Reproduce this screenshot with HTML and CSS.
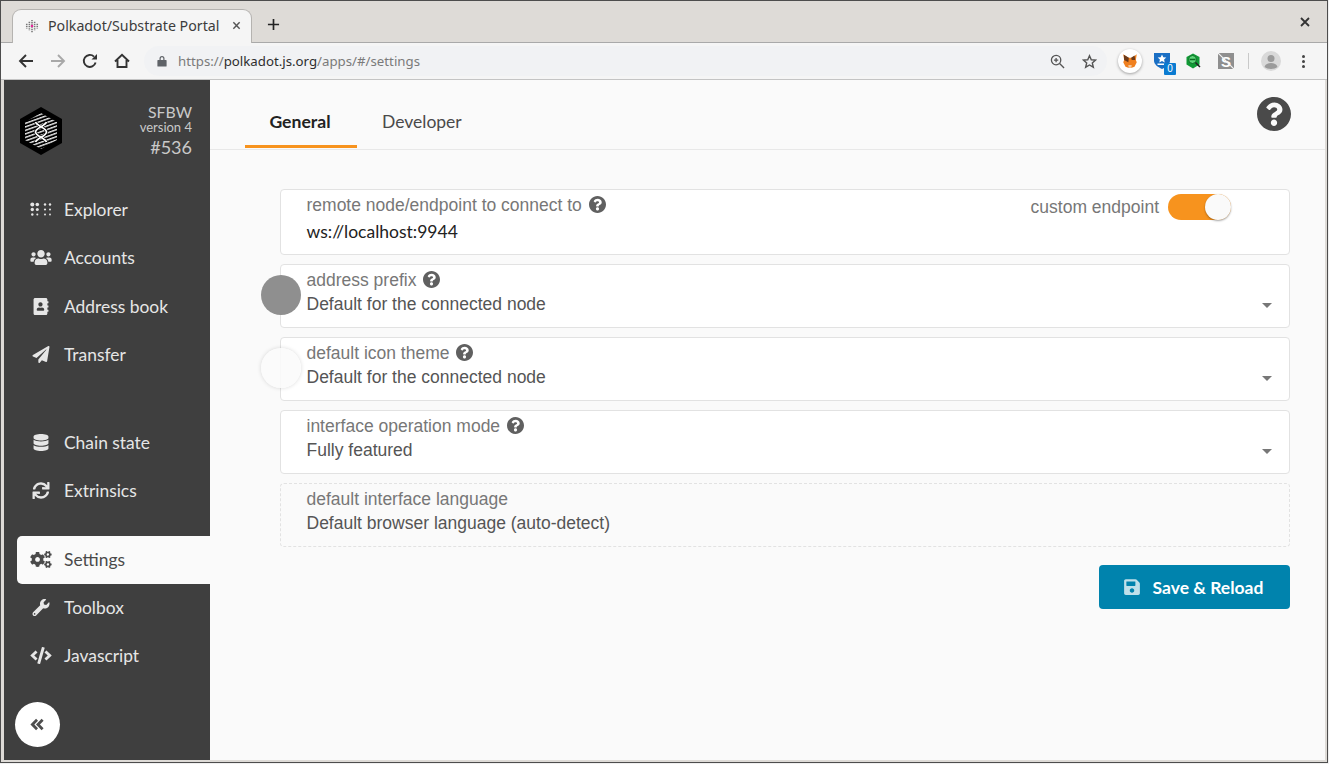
FILE: index.html
```html
<!DOCTYPE html>
<html lang="en">
<head>
    <meta charset="UTF-8">
    <title>Polkadot/Substrate Portal</title>
    <link rel="stylesheet" href="styles.css">
</head>
<body>
<div class="window">
    <div class="tabstrip">
        <div class="tab">
            <svg class="favicon" viewBox="0 0 16 16">
                <path d="M2 5.500V11M5 3V13.500M8 1V15.500M11 3V13.500M14 5.500V11" fill="none" stroke="#777" stroke-width="1.800" stroke-dasharray="1.500 1"/>
                <circle cx="8" cy="8" r="1.500" fill="#e6279a"/>
            </svg>
            <span class="tab-title">Polkadot/Substrate Portal</span>
            <svg class="tab-close" viewBox="0 0 10 10"><path d="M1.500 1.500l7 7M8.500 1.500l-7 7"/></svg>
        </div>
        <svg class="new-tab" viewBox="0 0 14 14"><path d="M7 1v12M1 7h12"/></svg>
        <svg class="win-close" viewBox="0 0 10 10"><path d="M1 1l8 8M9 1l-8 8"/></svg>
    </div>
    <div class="toolbar">
        <svg class="nav-icon" viewBox="0 0 16 16"><path d="M15 8H2M8 2L2 8l6 6"/></svg>
        <svg class="nav-icon is-off" viewBox="0 0 16 16"><path d="M1 8h13M8 2l6 6-6 6"/></svg>
        <svg class="nav-icon" viewBox="0 0 16 16"><path d="M13.600 9.500A6 6 0 1 1 12 3.600"/><path class="solid" d="M9.500 6.500H15V1z"/></svg>
        <svg class="nav-icon" viewBox="0 0 16 16"><path d="M1 8.500L8 1.800l7 6.700M3.500 7v7h9V7"/></svg>
        <div class="urlbar">
            <svg class="lock" viewBox="0 0 10 12"><path d="M1 5h8a.6.6 0 0 1 .6.6v5.400a.6.6 0 0 1-.6.6H1a.6.6 0 0 1-.6-.6V5.600A.6.6 0 0 1 1 5zM2.500 5V3.500a2.500 2.500 0 0 1 5 0V5H6.300V3.500a1.300 1.300 0 0 0-2.600 0V5z"/></svg>
            <span class="url">https://<b>polkadot.js.org</b>/apps/#/settings</span>
            <svg class="url-icon zoom-in" viewBox="0 0 16 16"><circle cx="6.500" cy="6.500" r="5"/><path d="M10.200 10.200L15 15M4.200 6.500h4.600M6.500 4.200v4.600"/></svg>
            <svg class="url-icon star" viewBox="0 0 16 16"><path d="M8 1.800l1.900 4.300 4.600.4-3.500 3 1.100 4.600L8 11.700l-4.100 2.400L5 9.500l-3.500-3 4.600-.4z"/></svg>
        </div>
        <div class="ext ext-fox">
            <svg viewBox="0 0 16 16">
                <path fill="#f0801f" d="M2 2l4.500 3h3.500L14 2l-.8 5 .8 2-2 4-2.500 1H6.500L4 13 2 9l.8-2z"/>
                <path fill="#6b3a1a" d="M2.500 2.500l4.500 2.500-.5 4-3.700-2zM12 3l-3 2 .5 2 3.200 0z"/>
                <path fill="#f6c79a" d="M6.500 11.500h3l-.3 2.500H6.800z"/>
            </svg>
        </div>
        <div class="ext ext-shield">
            <svg viewBox="0 0 16 16"><path fill="#1a6fc4" d="M0 0h16v8c0 3-3.500 6-8 8-4.500-2-8-5-8-8z"/><path fill="#fff" d="M8 1.500l1.300 2.700 3 .3-2.200 2 .6 2.900L8 8 5.300 9.400l.6-2.900-2.200-2 3-.3z"/><path fill="#fff" d="M3.500 10.500h7V12h-7z"/></svg>
            <span class="badge">0</span>
        </div>
        <div class="ext ext-hex">
            <svg viewBox="0 0 16 16"><path fill="#0f9a35" d="M8 .5l6.500 3.500v7.500L8 15.500 1.500 11.500V4z"/><circle cx="7.500" cy="6.500" r="4" fill="#5fd67a" stroke="#0a6e24"/><path d="M4.500 6.500h6" stroke="#0a6e24" stroke-width="1.500"/><path d="M10.500 9.500l4.500 4.500" stroke="#222" stroke-width="1.500"/></svg>
        </div>
        <div class="ext ext-s">
            <svg viewBox="0 0 16 16">
                <text class="ext-s-letter" x="8" y="13.500" text-anchor="middle">S</text>
                <path d="M0 0l16 16" stroke="#f5f5f5" stroke-width="1.200"/>
            </svg>
        </div>
        <div class="toolbar-sep"></div>
        <div class="avatar">
            <svg viewBox="0 0 20 20"><circle cx="10" cy="7.500" r="3.500"/><path d="M3.500 16c.8-3 3.500-4 6.500-4s5.700 1 6.500 4c-1.500 1.200-4 2-6.500 2s-5-.8-6.500-2z"/></svg>
        </div>
        <div class="kebab"><i></i><i></i><i></i></div>
    </div>
    <div class="app">
        <aside class="sidebar">
            <div class="brand">
                <svg class="logo" viewBox="0 0 42 48">
                    <defs>
                        <pattern id="stripes" width="3.300" height="3.300" patternUnits="userSpaceOnUse" patternTransform="rotate(-20)">
                            <rect width="3.300" height="1.400" fill="#e8e8e8"/>
                        </pattern>
                    </defs>
                    <path d="M21 0L42 12V36L21 48 0 36V12z" fill="#000"/>
                    <path d="M21 6L37 15V33L21 42 5 33V15z" fill="url(#stripes)"/>
                    <path d="M15.500 15C17 19 26.500 21 26.500 25S17 31 15.500 35M26.500 15C25 19 15.500 21 15.500 25S25 31 26.500 35" fill="none" stroke="#000" stroke-width="3"/>
                    <path d="M15.500 15C17 19 26.500 21 26.500 25S17 31 15.500 35M26.500 15C25 19 15.500 21 15.500 25S25 31 26.500 35" fill="none" stroke="#fff" stroke-width="1.800"/>
                </svg>
                <div class="chain-info">
                    <div class="chain-name">SFBW</div>
                    <div class="chain-version">version 4</div>
                    <div class="chain-block">#536</div>
                </div>
            </div>
            <nav class="menu">
                <a class="menu-item"><span class="menu-icon"><svg viewBox="0 0 22 14"><circle cx="2.300" cy="2" r="2"/><circle cx="7.300" cy="2" r="1.800"/><circle cx="2.300" cy="7" r="1.700"/><circle cx="7.300" cy="7" r="1.500"/><circle cx="2.300" cy="12" r="1.200"/><circle cx="7.300" cy="12" r="1"/><circle cx="15" cy="2" r="1.200"/><circle cx="20" cy="2" r="1.200"/><circle cx="15" cy="7" r="1.100"/><circle cx="20" cy="7" r="1"/><circle cx="15" cy="12" r="1"/><circle cx="20" cy="12" r=".9"/></svg></span>Explorer</a>
                <a class="menu-item"><span class="menu-icon"><svg viewBox="0 0 640 512"><path d="M96 224c35.300 0 64-28.700 64-64s-28.700-64-64-64-64 28.700-64 64 28.700 64 64 64zm448 0c35.300 0 64-28.700 64-64s-28.700-64-64-64-64 28.700-64 64 28.700 64 64 64zm32 32h-64c-17.600 0-33.500 7.100-45.100 18.600 40.300 22.100 68.900 62 75.100 109.400h66c17.700 0 32-14.300 32-32v-32c0-35.300-28.700-64-64-64zm-256 0c61.900 0 112-50.100 112-112S381.900 32 320 32 208 82.100 208 144s50.100 112 112 112zm76.800 32h-8.300c-20.800 10-43.900 16-68.500 16s-47.600-6-68.500-16h-8.300C179.600 288 128 339.600 128 403.200V432c0 26.500 21.500 48 48 48h288c26.500 0 48-21.500 48-48v-28.800c0-63.600-51.600-115.200-115.200-115.200zm-223.700-13.400C161.500 263.100 145.600 256 128 256H64c-35.300 0-64 28.700-64 64v32c0 17.700 14.300 32 32 32h65.900c6.300-47.400 34.900-87.300 75.200-109.400z"/></svg></span>Accounts</a>
                <a class="menu-item"><span class="menu-icon"><svg viewBox="0 0 448 512"><path d="M436 160c6.600 0 12-5.400 12-12v-40c0-6.600-5.400-12-12-12h-20V48c0-26.500-21.500-48-48-48H48C21.500 0 0 21.500 0 48v416c0 26.500 21.500 48 48 48h320c26.500 0 48-21.500 48-48v-48h20c6.600 0 12-5.400 12-12v-40c0-6.600-5.400-12-12-12h-20v-64h20c6.600 0 12-5.400 12-12v-40c0-6.600-5.400-12-12-12h-20v-64h20zm-228-32c35.300 0 64 28.700 64 64s-28.700 64-64 64-64-28.700-64-64 28.700-64 64-64zm112 236.800c0 10.600-10 19.200-22.400 19.200H118.400C106 384 96 375.400 96 364.800v-19.200c0-31.800 30.100-57.600 67.200-57.600h5c12.300 5.100 25.700 8 39.800 8s27.600-2.900 39.800-8h5c37.100 0 67.200 25.800 67.200 57.600v19.200z"/></svg></span>Address book</a>
                <a class="menu-item"><span class="menu-icon"><svg viewBox="0 0 512 512"><path d="M476 3.200L12.500 270.600c-18.100 10.400-15.800 35.600 2.200 43.200L121 358.400l287.300-253.200c5.500-4.900 13.300 2.600 8.600 8.300L176 407v80.500c0 23.600 28.500 32.900 42.500 15.800L282 426l124.600 52.200c14.200 6 30.400-2.900 33-18.200l72-432C515 7.800 493.300-6.800 476 3.200z"/></svg></span>Transfer</a>
                <div class="menu-gap-lg"></div>
                <a class="menu-item"><span class="menu-icon"><svg viewBox="0 0 448 512"><path d="M448 73.143v45.714C448 159.143 347.667 192 224 192S0 159.143 0 118.857V73.143C0 32.857 100.333 0 224 0s224 32.857 224 73.143zM448 176v102.857C448 319.143 347.667 352 224 352S0 319.143 0 278.857V176c48.125 33.143 136.208 48.572 224 48.572S399.874 209.143 448 176zm0 160v102.857C448 479.143 347.667 512 224 512S0 479.143 0 438.857V336c48.125 33.143 136.208 48.572 224 48.572S399.874 369.143 448 336z"/></svg></span>Chain state</a>
                <a class="menu-item"><span class="menu-icon"><svg viewBox="0 0 512 512"><path d="M440.650 12.570l4 82.770A247.160 247.160 0 0 0 255.830 8C134.730 8 33.910 94.920 12.290 209.820A12 12 0 0 0 24.090 224h49.050a12 12 0 0 0 11.670-9.260 175.910 175.910 0 0 1 317-56.940l-101.460-4.860a12 12 0 0 0-12.570 12v47.410a12 12 0 0 0 12 12H500a12 12 0 0 0 12-12V12a12 12 0 0 0-12-12h-47.370a12 12 0 0 0-11.980 12.570zM255.830 432a175.610 175.610 0 0 1-146-77.800l101.800 4.870a12 12 0 0 0 12.570-12v-47.400a12 12 0 0 0-12-12H12a12 12 0 0 0-12 12V500a12 12 0 0 0 12 12h47.350a12 12 0 0 0 12-12.600l-4.150-82.570A247.170 247.170 0 0 0 255.830 504c121.110 0 221.930-86.920 243.550-201.820a12 12 0 0 0-11.800-14.180h-49.050a12 12 0 0 0-11.670 9.260A175.860 175.860 0 0 1 255.830 432z"/></svg></span>Extrinsics</a>
                <div class="menu-gap-sm"></div>
                <a class="menu-item is-active"><span class="menu-icon"><svg viewBox="0 0 640 512"><path d="M512.100 191l-8.200 14.300c-3 5.300-9.400 7.500-15.100 5.400-11.800-4.400-22.600-10.700-32.100-18.600-4.600-3.800-5.800-10.500-2.800-15.700l8.200-14.300c-6.900-8-12.300-17.300-15.900-27.400h-16.500c-6 0-11.200-4.300-12.200-10.300-2-12-2.100-24.600 0-37.100 1-6 6.200-10.400 12.200-10.400h16.500c3.600-10.100 9-19.400 15.900-27.400l-8.200-14.300c-3-5.200-1.900-11.900 2.800-15.700 9.500-7.900 20.400-14.200 32.100-18.600 5.700-2.100 12.100.1 15.100 5.400l8.200 14.300c10.500-1.900 21.200-1.900 31.700 0L552 6.300c3-5.300 9.400-7.500 15.100-5.400 11.800 4.400 22.600 10.700 32.100 18.600 4.600 3.800 5.800 10.500 2.800 15.700l-8.200 14.300c6.900 8 12.300 17.300 15.900 27.400h16.500c6 0 11.200 4.300 12.200 10.300 2 12 2.100 24.600 0 37.100-1 6-6.200 10.400-12.200 10.400h-16.500c-3.600 10.100-9 19.400-15.900 27.400l8.200 14.300c3 5.200 1.900 11.900-2.800 15.700-9.500 7.900-20.400 14.200-32.100 18.600-5.700 2.100-12.100-.1-15.100-5.400l-8.200-14.300c-10.400 1.900-21.200 1.900-31.700 0zm-10.500-58.800c38.500 29.600 82.400-14.300 52.800-52.800-38.500-29.700-82.400 14.300-52.800 52.800zM386.300 286.100l33.700 16.800c10.100 5.800 14.500 18.100 10.500 29.100-8.900 24.200-26.400 46.400-42.600 65.800-7.400 8.900-20.200 11.100-30.300 5.300l-29.100-16.800c-16 13.700-34.600 24.600-54.900 31.700v33.600c0 11.600-8.300 21.600-19.700 23.600-24.600 4.200-50.400 4.400-75.900 0-11.500-2-20-11.900-20-23.600V418c-20.300-7.200-38.900-18-54.900-31.700L74 403c-10 5.800-22.900 3.600-30.300-5.300-16.200-19.400-33.300-41.600-42.200-65.700-4-10.900.4-23.200 10.500-29.100l33.300-16.800c-3.900-20.900-3.900-42.400 0-63.400L12 205.800c-10.100-5.800-14.600-18.100-10.500-29 8.900-24.200 26-46.400 42.200-65.800 7.400-8.900 20.200-11.100 30.300-5.300l29.100 16.800c16-13.700 34.600-24.600 54.900-31.700V57.100c0-11.500 8.200-21.500 19.600-23.500 24.600-4.200 50.500-4.400 76-.1 11.500 2 20 11.900 20 23.600v33.600c20.300 7.200 38.900 18 54.900 31.700l29.100-16.800c10-5.800 22.900-3.600 30.300 5.300 16.200 19.400 33.200 41.600 42.100 65.800 4 10.900.1 23.200-10 29.100l-33.700 16.800c3.900 21 3.900 42.500 0 63.500zm-117.600 21.100c59.200-77-28.700-164.900-105.700-105.700-59.200 77 28.700 164.900 105.700 105.700zm243.400 182.700l-8.200 14.300c-3 5.300-9.400 7.500-15.100 5.400-11.800-4.400-22.600-10.700-32.100-18.600-4.600-3.800-5.800-10.500-2.800-15.700l8.200-14.300c-6.900-8-12.300-17.300-15.900-27.400h-16.500c-6 0-11.200-4.300-12.200-10.300-2-12-2.100-24.600 0-37.100 1-6 6.200-10.400 12.200-10.400h16.500c3.600-10.100 9-19.400 15.900-27.400l-8.200-14.300c-3-5.200-1.900-11.900 2.800-15.700 9.500-7.900 20.400-14.200 32.100-18.600 5.700-2.100 12.100.1 15.100 5.400l8.200 14.300c10.500-1.900 21.200-1.900 31.700 0l8.200-14.300c3-5.300 9.400-7.500 15.100-5.400 11.800 4.400 22.600 10.700 32.100 18.600 4.600 3.800 5.800 10.500 2.800 15.700l-8.200 14.300c6.900 8 12.300 17.300 15.900 27.400h16.500c6 0 11.200 4.300 12.200 10.300 2 12 2.100 24.600 0 37.100-1 6-6.200 10.400-12.200 10.400h-16.500c-3.600 10.100-9 19.400-15.900 27.400l8.200 14.300c3 5.200 1.900 11.900-2.800 15.700-9.500 7.900-20.400 14.200-32.100 18.600-5.700 2.100-12.100-.1-15.100-5.400l-8.200-14.300c-10.400 1.900-21.200 1.900-31.700 0zM501.600 431c38.500 29.600 82.400-14.300 52.800-52.800-38.500-29.600-82.400 14.300-52.800 52.800z"/></svg></span>Settings</a>
                <a class="menu-item"><span class="menu-icon"><svg viewBox="0 0 512 512"><path d="M507.730 109.100c-2.240-9.030-13.540-12.090-20.120-5.510l-74.360 74.360-67.880-11.310-11.310-67.880 74.360-74.360c6.620-6.620 3.430-17.900-5.660-20.160-47.380-11.740-99.550.91-136.580 37.930-39.640 39.640-50.550 97.100-34.050 147.200L18.740 402.760c-24.990 24.990-24.990 65.510 0 90.500 24.990 24.990 65.510 24.990 90.500 0l213.210-213.210c50.120 16.710 107.470 5.680 147.370-34.220 37.070-37.070 49.700-89.320 37.910-136.730zM64 472c-13.250 0-24-10.750-24-24 0-13.260 10.750-24 24-24s24 10.740 24 24c0 13.250-10.750 24-24 24z"/></svg></span>Toolbox</a>
                <a class="menu-item"><span class="menu-icon"><svg viewBox="0 0 640 512"><path d="M278.900 511.500l-61-17.700c-6.400-1.800-10-8.500-8.200-14.900L346.200 8.700c1.800-6.400 8.500-10 14.900-8.200l61 17.700c6.400 1.800 10 8.500 8.200 14.900L293.800 503.300c-1.900 6.400-8.500 10.100-14.900 8.200zm-114-112.200l43.500-46.400c4.600-4.900 4.300-12.700-.8-17.200L117 256l90.600-79.700c5.100-4.500 5.500-12.300.8-17.200l-43.500-46.400c-4.500-4.800-12.100-5.100-17-.5L3.800 247.200c-5.100 4.700-5.100 12.800 0 17.500l144.100 135.100c4.900 4.600 12.500 4.400 17-.5zm327.200.6l144.100-135.100c5.100-4.700 5.100-12.800 0-17.500L492.100 112.100c-4.800-4.500-12.400-4.300-17 .5L431.600 159c-4.600 4.900-4.300 12.700.8 17.200L523 256l-90.600 79.700c-5.100 4.500-5.500 12.300-.8 17.200l43.500 46.400c4.500 4.900 12.100 5.100 17 .6z"/></svg></span>Javascript</a>
            </nav>
            <button class="collapse-btn">
                <svg viewBox="0 0 16 14"><path d="M7.500 2L2.500 7l5 5M13.500 2l-5 5 5 5"/></svg>
            </button>
        </aside>
        <main class="content">
            <div class="content-head">
                <div class="tabs">
                    <a class="page-tab is-active">General</a>
                    <a class="page-tab">Developer</a>
                </div>
                <svg class="help-btn"><use href="#q"/></svg>
            </div>
            <div class="form">
                <div class="field field-endpoint">
                    <label class="field-label">remote node/endpoint to connect to <svg class="qmark"><use href="#q"/></svg></label>
                    <div class="field-input">ws://localhost:9944</div>
                    <div class="custom-toggle">
                        <span>custom endpoint</span>
                        <span class="toggle"><i class="knob"></i></span>
                    </div>
                </div>
                <div class="field">
                    <label class="field-label">address prefix <svg class="qmark"><use href="#q"/></svg></label>
                    <div class="field-value">Default for the connected node</div>
                    <i class="caret"></i>
                    <i class="ripple ripple-dark"></i>
                </div>
                <div class="field">
                    <label class="field-label">default icon theme <svg class="qmark"><use href="#q"/></svg></label>
                    <div class="field-value">Default for the connected node</div>
                    <i class="caret"></i>
                    <i class="ripple ripple-light"></i>
                </div>
                <div class="field">
                    <label class="field-label">interface operation mode <svg class="qmark"><use href="#q"/></svg></label>
                    <div class="field-value">Fully featured</div>
                    <i class="caret"></i>
                </div>
                <div class="field is-disabled">
                    <label class="field-label">default interface language</label>
                    <div class="field-value">Default browser language (auto-detect)</div>
                </div>
                <div class="actions">
                    <button class="save-btn">
                        <svg viewBox="0 0 448 512"><path d="M433.941 129.941l-83.882-83.882A48 48 0 0 0 316.118 32H48C21.490 32 0 53.490 0 80v352c0 26.510 21.490 48 48 48h352c26.510 0 48-21.490 48-48V163.882a48 48 0 0 0-14.059-33.941zM224 416c-35.346 0-64-28.654-64-64 0-35.346 28.654-64 64-64s64 28.654 64 64c0 35.346-28.654 64-64 64zm96-304.520V212c0 6.627-5.373 12-12 12H76c-6.627 0-12-5.373-12-12V108c0-6.627 5.373-12 12-12h228.520c3.183 0 6.235 1.264 8.485 3.515l3.480 3.480A11.996 11.996 0 0 1 320 111.480z"/></svg>
                        Save &amp; Reload
                    </button>
                </div>
            </div>
        </main>
    </div>
</div>
<svg class="defs" width="0" height="0">
    <symbol id="q" viewBox="8 8 496 496"><path d="M504 256c0 136.997-111.043 248-248 248S8 392.997 8 256C8 119.083 119.043 8 256 8s248 111.083 248 248zM262.655 90c-54.497 0-89.255 22.957-116.549 63.758-3.536 5.286-2.353 12.415 2.715 16.258l34.699 26.310c5.205 3.947 12.621 3.008 16.665-2.122 17.864-22.658 30.113-35.797 57.303-35.797 20.429 0 45.698 13.148 45.698 32.958 0 14.976-12.363 22.667-32.534 33.976C247.128 238.528 216 254.941 216 296v4c0 6.627 5.373 12 12 12h56c6.627 0 12-5.373 12-12v-1.333c0-28.462 83.186-29.647 83.186-106.667 0-58.002-60.165-102-116.531-102zM256 338c-25.365 0-46 20.635-46 46 0 25.364 20.635 46 46 46s46-20.636 46-46c0-25.365-20.635-46-46-46z"/></symbol>
</svg>
</body>
</html>
```

FILE: styles.css
```css
html, body {
    margin: 0;
    height: 100%;
    overflow: hidden;
}
body {
    font-family: Lato, sans-serif;
    background-color: #f0f0f0;
}
.defs {
    position: absolute;
}
.window {
    width: 1328px;
    height: 763px;
    box-sizing: border-box;
    display: flex;
    flex-direction: column;
    border: 1px solid #4d4d4d;
    background-color: #dedbd7;
}

/* browser chrome */
.tabstrip {
    height: 42px;
    flex: none;
    display: flex;
    align-items: flex-end;
    box-sizing: border-box;
    padding-left: 11px;
    border-bottom: 1px solid #a9a9a9;
}
.tab {
    width: 240px;
    height: 34px;
    margin-bottom: -1px;
    box-sizing: border-box;
    display: flex;
    align-items: center;
    padding: 0 0 2px 12px;
    background-color: #f5f5f5;
    border: 1px solid #b5b3b0;
    border-bottom: none;
    border-radius: 9px 9px 0 0;
}
.favicon {
    width: 14px;
    height: 14px;
    flex: none;
}
.tab-title {
    margin-left: 9px;
    font-family: "Noto Sans", sans-serif;
    font-size: 14.2px;
    color: #3c3c3c;
    white-space: nowrap;
}
.tab-close {
    width: 9px;
    height: 9px;
    margin-left: 13px;
    fill: none;
    stroke: #555;
    stroke-width: 1.6;
}
.new-tab {
    width: 13px;
    height: 13px;
    margin: 0 0 11px 15px;
    fill: none;
    stroke: #222;
    stroke-width: 1.8;
}
.win-close {
    width: 10px;
    height: 10px;
    margin: 0 17px 15px auto;
    fill: none;
    stroke: #333;
    stroke-width: 1.8;
}
.toolbar {
    height: 37px;
    flex: none;
    display: flex;
    align-items: center;
    box-sizing: border-box;
    padding: 0 0 0 17px;
    background-color: #f5f5f5;
    border-bottom: 1px solid #c4c4c4;
}
.nav-icon {
    width: 16px;
    height: 16px;
    flex: none;
    margin-right: 16px;
    fill: none;
    stroke: #333;
    stroke-width: 1.9;
}
.nav-icon.is-off {
    stroke: #a8a8a8;
}
.nav-icon .solid {
    fill: #333;
    stroke: none;
}
.urlbar {
    width: 963px;
    height: 30px;
    margin-left: -2px;
    box-sizing: border-box;
    display: flex;
    align-items: center;
    padding: 0 10px 0 13px;
    background-color: #f1f2f4;
    border-radius: 15px;
    flex: none;
}
.lock {
    width: 10px;
    height: 12px;
    fill: #5f6368;
}
.url {
    margin-left: 11px;
    font-family: "Noto Sans", sans-serif;
    font-size: 13.25px;
    color: #7a7a7a;
    white-space: nowrap;
}
.url b {
    font-weight: 400;
    color: #2e2e2e;
}
.url-icon {
    width: 15px;
    height: 15px;
    fill: none;
    stroke: #555;
    stroke-width: 1.4;
}
.zoom-in {
    margin-left: auto;
}
.star {
    margin-left: 17px;
    stroke-width: 1.5;
}
.ext {
    flex: none;
    display: flex;
    align-items: center;
    justify-content: center;
    position: relative;
}
.ext svg {
    width: 16px;
    height: 16px;
    display: block;
}
.ext-fox {
    width: 24px;
    height: 24px;
    margin-left: 11px;
    background-color: #fff;
    border-radius: 50%;
    box-shadow: 0 1px 3px rgba(0, 0, 0, .35);
}
.ext-fox svg {
    width: 18px;
    height: 18px;
}
.ext-shield {
    width: 16px;
    height: 16px;
    margin-left: 12px;
}
.badge {
    position: absolute;
    right: -6px;
    bottom: -6px;
    width: 12px;
    height: 12px;
    font-family: "Liberation Sans", sans-serif;
    font-size: 10px;
    line-height: 12px;
    text-align: center;
    color: #fff;
    background-color: #0a7bd1;
    border-radius: 1px;
}
.ext-hex {
    width: 16px;
    height: 16px;
    margin-left: 15px;
}
.ext-s {
    width: 16px;
    height: 16px;
    margin-left: 17px;
    background-color: #8f8f8f;
}
.ext-s-letter {
    font-family: "Liberation Sans", sans-serif;
    font-size: 15px;
    font-weight: 700;
    fill: #fff;
}
.toolbar-sep {
    width: 1px;
    height: 16px;
    margin-left: 14px;
    background-color: #c9c9c9;
}
.avatar {
    width: 20px;
    height: 20px;
    margin-left: 12px;
    background-color: #d9d9d9;
    border-radius: 50%;
    overflow: hidden;
    flex: none;
}
.avatar svg {
    display: block;
    fill: #9b9b9b;
}
.kebab {
    display: flex;
    flex-direction: column;
    gap: 2px;
    margin-left: 21px;
}
.kebab i {
    width: 3px;
    height: 3px;
    background-color: #444;
    border-radius: 50%;
}

/* app */
.app {
    flex: 1;
    min-height: 0;
    display: flex;
    margin: 0 2px 2px 3px;
}
.sidebar {
    width: 206px;
    flex: none;
    position: relative;
    background-color: #3f3f3f;
    color: #e6e6e6;
}
.brand {
    height: 105.85px;
    box-sizing: border-box;
    display: flex;
    justify-content: space-between;
    padding: 24px 18px 0 16px;
}
.logo {
    width: 42px;
    height: 48px;
    margin-top: 3px;
}
.chain-info {
    text-align: right;
    color: #c9c9c9;
}
.chain-name {
    font-size: 15.8px;
    line-height: 16px;
}
.chain-version {
    font-size: 13px;
    line-height: 14px;
}
.chain-block {
    font-size: 18px;
    line-height: 27px;
}
.menu {
    padding-left: 13px;
    display: flex;
    flex-direction: column;
}
.menu-item {
    height: 48.1px;
    display: flex;
    align-items: center;
    font-size: 17.4px;
    color: #e6e6e6;
    border-radius: 5px 0 0 5px;
}
.menu-icon {
    width: 22px;
    margin: 0 12px 0 13px;
    display: flex;
    justify-content: center;
}
.menu-icon svg {
    height: 17px;
    width: 22px;
    fill: currentColor;
}
.menu-item.is-active {
    background-color: #fafafa;
    color: #4a4a4a;
}
.menu-gap-lg {
    height: 40.6px;
}
.menu-gap-sm {
    height: 20.7px;
}
.collapse-btn {
    position: absolute;
    left: 11px;
    bottom: 13px;
    width: 45px;
    height: 45px;
    padding: 0;
    display: flex;
    align-items: center;
    justify-content: center;
    background-color: #fff;
    border: none;
    border-radius: 50%;
}
.collapse-btn svg {
    width: 15px;
    height: 13px;
    fill: none;
    stroke: #4d4d4d;
    stroke-width: 3;
}
.content {
    flex: 1;
    min-width: 0;
    background-color: #fafafa;
}
.content-head {
    height: 70px;
    box-sizing: border-box;
    display: flex;
    justify-content: space-between;
    padding: 0 34px 0 35px;
    border-bottom: 1px solid #e8e8e8;
}
.tabs {
    display: flex;
}
.page-tab {
    width: 112px;
    height: 68px;
    box-sizing: border-box;
    padding: 31px 2px 0 0;
    text-align: center;
    font-size: 17.5px;
    color: #4a4a4a;
}
.page-tab + .page-tab {
    width: auto;
    padding: 31px 25px 0;
}
.page-tab.is-active {
    font-size: 17.6px;
    font-weight: 700;
    color: #222;
    border-bottom: 3px solid #f7931e;
}
.help-btn {
    width: 34px;
    height: 34px;
    margin-top: 17px;
    fill: #4a4a4a;
}
.form {
    padding: 39px 35px 0 70px;
    display: flex;
    flex-direction: column;
    gap: 9px;
}
.field {
    height: 64px;
    box-sizing: border-box;
    position: relative;
    padding: 5px 26px 0 25.5px;
    background-color: #fff;
    border: 1px solid #e2e2e2;
    border-radius: 4px;
}
.field-endpoint {
    height: 66px;
}
.field-label {
    display: block;
    font-family: "Liberation Sans", sans-serif;
    font-size: 17.5px;
    line-height: 20px;
    color: #777;
}
.qmark {
    width: 17px;
    height: 17px;
    margin-left: 2px;
    vertical-align: -2px;
    fill: #606060;
}
.field-value {
    margin-top: 4px;
    font-family: "Liberation Sans", sans-serif;
    font-size: 17.5px;
    line-height: 20px;
    color: #555;
}
.field-input {
    margin-top: 7px;
    font-family: Lato, sans-serif;
    font-size: 17.5px;
    line-height: 20px;
    color: #222;
}
.custom-toggle {
    position: absolute;
    top: 4px;
    right: 58px;
    display: flex;
    align-items: center;
    gap: 9px;
    font-family: "Liberation Sans", sans-serif;
    font-size: 17.5px;
    color: #777;
}
.toggle {
    width: 63px;
    height: 26px;
    position: relative;
    background-color: #f7931e;
    border-radius: 13px;
}
.knob {
    position: absolute;
    top: 0;
    right: 0;
    width: 26px;
    height: 26px;
    background-color: #fafafa;
    border-radius: 50%;
    box-shadow: 0 1px 2px rgba(0, 0, 0, .35);
}
.caret {
    position: absolute;
    right: 17px;
    top: 38px;
    border-left: 5px solid transparent;
    border-right: 5px solid transparent;
    border-top: 5px solid #777;
}
.ripple {
    position: absolute;
    left: -20px;
    top: 10px;
    width: 40px;
    height: 40px;
    border-radius: 50%;
}
.ripple-dark {
    background-color: #8f8f8f;
}
.ripple-light {
    background-color: rgba(251, 251, 251, .9);
    box-shadow: 0 0 4px rgba(0, 0, 0, .15);
}
.is-disabled {
    background-color: transparent;
    border: 1px dashed #e2e2e2;
}
.actions {
    display: flex;
    justify-content: flex-end;
    margin-top: 9px;
}
.save-btn {
    width: 191px;
    height: 44px;
    display: flex;
    align-items: center;
    justify-content: center;
    gap: 13px;
    padding: 0 2px 0 0;
    font-family: Lato, sans-serif;
    font-size: 17.5px;
    font-weight: 700;
    color: #fff;
    background-color: #0083ad;
    border: none;
    border-radius: 4px;
}
.save-btn svg {
    width: 16px;
    height: 18px;
    fill: #fff;
    opacity: .75;
}
```
